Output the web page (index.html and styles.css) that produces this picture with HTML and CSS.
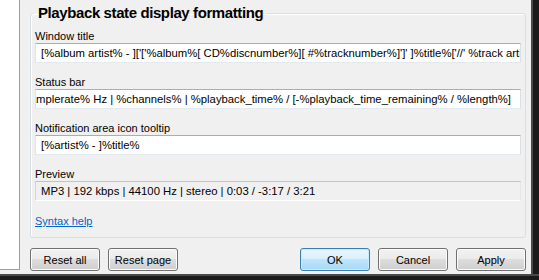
FILE: index.html
```html
<!DOCTYPE html>
<html lang="en">
<head>
    <meta charset="UTF-8">
    <title>Preferences: Title Formatting</title>
    <link rel="stylesheet" href="styles.css">
</head>
<body>

    <div class="window">
        <div class="client">
            <!-- page tree on the left, mostly cut off -->
            <div class="tree"></div>

            <div class="page">
                <fieldset class="group">
                    <legend>Playback state display formatting</legend>

                    <div class="field first">
                        <div class="label">Window title</div>
                        <div class="edit"><span>[%album artist% - ]['['%album%[ CD%discnumber%][ #%tracknumber%]']' ]%title%['//' %track artist%]</span></div>
                    </div>

                    <div class="field">
                        <div class="label">Status bar</div>
                        <div class="edit scrolled"><span>%codec% | %bitrate% kbps | %samplerate% Hz | %channels% | %playback_time% / [-%playback_time_remaining% / %length%]</span></div>
                    </div>

                    <div class="field">
                        <div class="label">Notification area icon tooltip</div>
                        <div class="edit"><span>[%artist% - ]%title%</span></div>
                    </div>

                    <div class="field">
                        <div class="label">Preview</div>
                        <div class="edit readonly"><span>MP3 | 192 kbps | 44100 Hz | stereo | 0:03 / -3:17 / 3:21</span></div>
                    </div>

                    <a class="link" href="#">Syntax help</a>
                </fieldset>

                <div class="buttons">
                    <div class="btn-group">
                        <button class="btn">Reset all</button>
                        <button class="btn">Reset page</button>
                    </div>
                    <div class="btn-group">
                        <button class="btn default">OK</button>
                        <button class="btn">Cancel</button>
                        <button class="btn">Apply</button>
                    </div>
                </div>
            </div>

            <div class="frame-right"></div>
        </div>
        <div class="frame-bottom"></div>
    </div>

</body>
</html>
```

FILE: styles.css
```css
body {
    margin: 0;
    padding: 0;
    background-color: #f0f0f0;
    font-family: "Liberation Sans", Arial, sans-serif;
    font-size: 11px;
    color: #000;
    overflow: hidden;
}
.window {
    width: 539px;
    height: 280px;
    display: flex;
    flex-direction: column;
}
.client {
    display: flex;
    height: 274px;
}
.tree {
    width: 19px;
    height: 269px;
    background: #fff;
    border-right: 1px solid #9a9ea6;
    border-bottom: 1px solid #9a9ea6;
}
.page {
    width: 496px;
    padding: 3px 5px 0 10px;
}
.frame-right {
    flex: 1;
    background: #1b1b1b;
    border-left: 2px solid #4a4a4a;
}
.frame-bottom {
    flex: 1;
    background: #1b1b1b;
    border-top: 2px solid #4a4a4a;
}

/* group box */
.group {
    min-width: 0;
    margin: 0;
    padding: 0 4px 9px 4px;
    border: 1px solid #d5dfe5;
    border-radius: 3px;
    box-shadow: inset 1px 1px 0 #fff;
}
.group legend {
    margin-left: -2px;
    padding: 0 4px 0 5px;
    font-size: 15px;
    font-weight: bold;
    letter-spacing: -0.4px;
    line-height: 20px;
}
.field {
    margin-top: 13px;
}
.field.first {
    margin-top: 7px;
}
.label {
    line-height: 13px;
}
.edit {
    box-sizing: border-box;
    height: 20px;
    padding: 0 5px;
    font-size: 11.3px;
    line-height: 18px;
    background: #fff;
    border: 1px solid;
    border-color: #abadb3 #dbdfe6 #e3e9ef #e2e3ea;
    white-space: nowrap;
    overflow: hidden;
    display: flex;
}
.edit span {
    flex-shrink: 0;
}
.edit.scrolled {
    justify-content: flex-end;
    padding-right: 9px;
}
.edit.readonly {
    background: #f0f0f0;
    border-color: #c3c3c3 #e6e6e6 #fff #d6d6d6;
}
.link {
    display: block;
    margin-top: 14px;
    width: max-content;
    line-height: 13px;
    color: #0066cc;
}

/* dialog buttons */
.buttons {
    display: flex;
    justify-content: space-between;
    margin-top: 10px;
}
.btn-group {
    display: flex;
    gap: 8px;
}
.btn {
    box-sizing: border-box;
    width: 70px;
    height: 23px;
    padding: 0;
    font-family: "Liberation Sans", Arial, sans-serif;
    font-size: 11px;
    color: #000;
    border: 1px solid #707070;
    border-radius: 3px;
    background: linear-gradient(#f2f2f2 0%, #ebebeb 50%, #dddddd 50%, #cfcfcf 100%);
    box-shadow: inset 0 0 0 1px #fcfcfc;
    cursor: pointer;
}
.btn.default {
    border-color: #3c7fb1;
    background: linear-gradient(#eaf6fd 0%, #d9f0fc 50%, #bee6fd 50%, #a7d9f5 100%);
    box-shadow: inset 0 0 0 1px #c8ecfc;
}
```
